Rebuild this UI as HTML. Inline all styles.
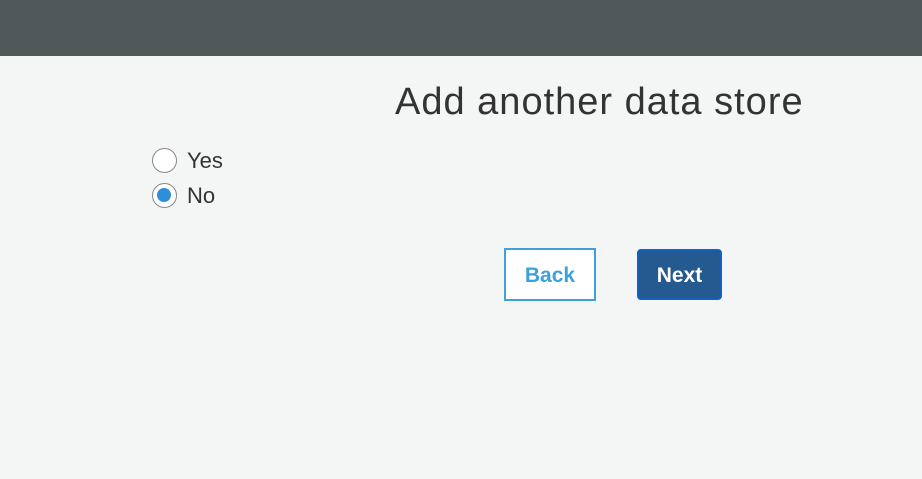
<!DOCTYPE html>
<html><head><style>
body{margin:0;width:922px;height:479px;background:#f4f5f5;font-family:"Liberation Sans",sans-serif;position:relative;overflow:hidden}
.top{position:absolute;left:0;top:0;width:922px;height:56px;background:#505859}
h1{position:absolute;left:395px;top:81px;margin:0;font-weight:normal;font-size:38px;letter-spacing:1px;color:#333;white-space:nowrap}
.r{position:absolute;left:152px;width:25px;height:25px;border:1.5px solid #888;border-radius:50%;background:#fff;box-sizing:border-box}
.r.on::after{content:"";position:absolute;left:4px;top:4px;width:14px;height:14px;border-radius:50%;background:#2f8ed9}
.l{position:absolute;left:187px;font-size:22px;color:#333}
.back{position:absolute;left:504px;top:248px;width:92px;height:53px;border:2px solid #3fa0de;box-sizing:border-box;background:#fff;color:#3fa0de;font-weight:bold;font-size:21px;text-align:center;line-height:51px}
.next{position:absolute;left:637px;top:249px;width:85px;height:51px;border:2px solid #1560c0;border-radius:4px;box-sizing:border-box;background:#255a91;color:#fff;font-weight:bold;font-size:21px;text-align:center;line-height:49px}
</style></head><body>
<div class="top"></div>
<h1>Add another data store</h1>
<div class="r" style="top:148px"></div><div class="l" style="top:148px">Yes</div>
<div class="r on" style="top:183px"></div><div class="l" style="top:183px">No</div>
<div class="back">Back</div>
<div class="next">Next</div>
</body></html>
